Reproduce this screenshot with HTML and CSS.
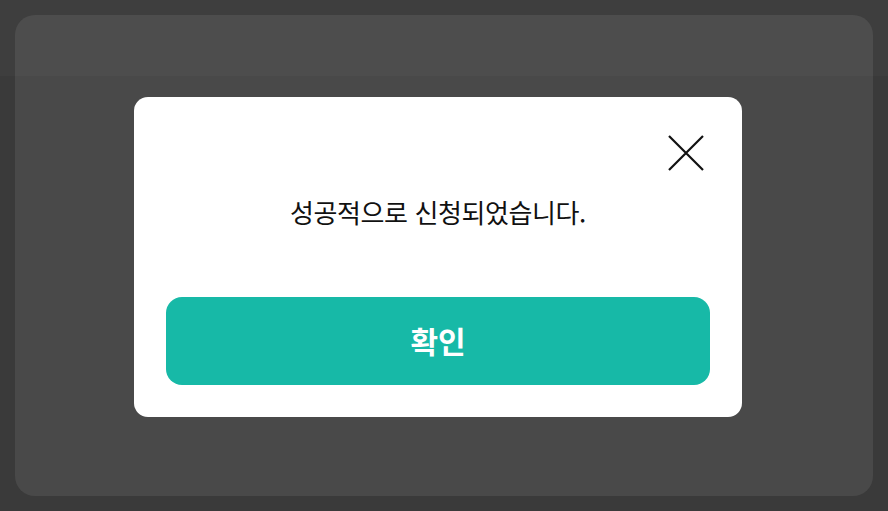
FILE: index.html
```html
<!DOCTYPE html>
<html lang="ko">
<head>
  <meta charset="UTF-8">
  <title>신청 완료</title>
  <meta name="viewport" content="width=device-width, initial-scale=1.0">
  <link rel="stylesheet" href="styles.css">
</head>
<body>
  <div class="page">
    <div class="card"></div>
  </div>
  <div class="topbar"></div>

  <div class="overlay">
    <div class="modal">
      <div class="modal-head">
        <button class="close" aria-label="닫기">
          <svg width="36" height="36" viewBox="0 0 36 36">
            <path d="M1 1 L35 35 M35 1 L1 35" stroke="#111" stroke-width="2.2" fill="none"/>
          </svg>
        </button>
      </div>
      <p class="message">성공적으로 신청되었습니다.</p>
      <button class="confirm">확인</button>
    </div>
  </div>
</body>
</html>
```

FILE: styles.css
```css
html, body {
  margin: 0;
  height: 100%;
}
body {
  background-color: #3a3a3a;
  font-family: "Noto Sans CJK KR", "Noto Sans", sans-serif;
  overflow: hidden;
}
.page {
  padding: 15px;
}
.card {
  height: 481px;
  background-color: #494949;
  border-radius: 20px;
}
.topbar {
  position: fixed;
  top: 0;
  left: 0;
  right: 0;
  height: 76px;
  background-color: rgba(255, 255, 255, 0.025);
}
.overlay {
  position: fixed;
  inset: 0;
  display: flex;
  align-items: center;
  justify-content: center;
  padding: 3px 12px 0 0;
}
.modal {
  width: 608px;
  height: 320px;
  box-sizing: border-box;
  background-color: #fff;
  border-radius: 14px;
  padding: 38px 32px 32px;
  display: flex;
  flex-direction: column;
}
.modal-head {
  display: flex;
  justify-content: flex-end;
  padding-right: 6px;
}
.close {
  border: none;
  background: none;
  padding: 0;
  width: 36px;
  height: 36px;
  cursor: pointer;
}
.close svg {
  display: block;
}
.message {
  margin: 23px 0 0;
  text-align: center;
  font-size: 26px;
  line-height: 36px;
  color: #111;
  letter-spacing: -0.4px;
}
.confirm {
  margin-top: auto;
  height: 88px;
  border: none;
  border-radius: 16px;
  background-color: #17b9a7;
  color: #fff;
  font-family: inherit;
  font-size: 30px;
  font-weight: 700;
  padding-bottom: 4px;
}
```
